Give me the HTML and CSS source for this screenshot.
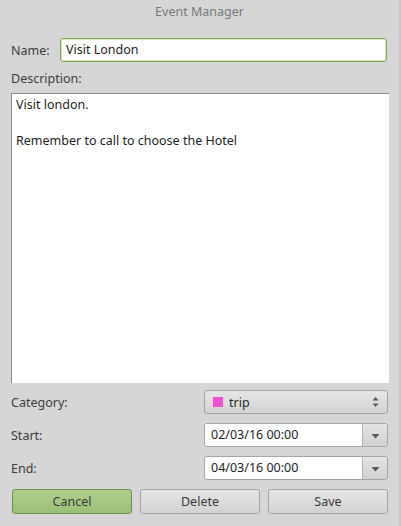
FILE: index.html
```html
<!DOCTYPE html>
<html>
<head>
<meta charset="utf-8">
<link rel="stylesheet" href="styles.css">
</head>
<body>
<div class="window">
  <div class="titlebar">Event Manager</div>
  <div class="content">
    <div class="name-row">
      <label class="label">Name:</label>
      <div class="entry focused">Visit London</div>
    </div>
    <div class="label desc-label">Description:</div>
    <div class="textview">
      <div class="line">Visit london.</div>
      <div class="line">&nbsp;</div>
      <div class="line">Remember to call to choose the Hotel</div>
    </div>
    <div class="grid">
      <div class="label">Category:</div>
      <div class="combo">
        <span class="swatch"></span>
        <span class="combo-text">trip</span>
        <svg class="updown" width="7" height="12" viewBox="0 0 7 12"><path d="M3.5 1 L6.5 4.5 L0.5 4.5 Z" fill="#5a5a5a"/><path d="M3.5 11 L6.5 7.5 L0.5 7.5 Z" fill="#5a5a5a"/></svg>
      </div>
      <div class="label">Start:</div>
      <div class="datefield">
        <div class="date-text">02/03/16 00:00</div>
        <div class="date-btn"><svg width="9" height="6" viewBox="0 0 9 6"><path d="M0.5 1 L8.5 1 L4.5 5.5 Z" fill="#5a5a5a"/></svg></div>
      </div>
      <div class="label">End:</div>
      <div class="datefield">
        <div class="date-text">04/03/16 00:00</div>
        <div class="date-btn"><svg width="9" height="6" viewBox="0 0 9 6"><path d="M0.5 1 L8.5 1 L4.5 5.5 Z" fill="#5a5a5a"/></svg></div>
      </div>
    </div>
    <div class="buttons">
      <div class="btn btn-suggested">Cancel</div>
      <div class="btn">Delete</div>
      <div class="btn">Save</div>
    </div>
  </div>
</div>
</body>
</html>
```

FILE: styles.css
```css
html, body {
  margin: 0;
  padding: 0;
  background: #d6d6d6;
}
body {
  font-family: "Noto Sans", "DejaVu Sans", sans-serif;
  font-size: 12.5px;
  color: #3c3c3c;
}
.window {
  width: 401px;
  height: 526px;
  box-sizing: border-box;
  border-right: 2px solid #c8c8c8;
  background: #d6d6d6;
  display: flex;
  flex-direction: column;
}
.titlebar {
  height: 26px;
  line-height: 24px;
  text-align: center;
  color: #787878;
  font-size: 12.5px;
}
.content {
  display: flex;
  flex-direction: column;
  padding: 12px 12px 0 11px;
}
.label {
  color: #3c3c3c;
}
.name-row {
  display: flex;
  align-items: center;
  height: 24px;
}
.name-row .label {
  width: 49px;
  flex: none;
}
.entry {
  flex: 1;
  height: 24px;
  box-sizing: border-box;
  background: #fff;
  border: 1px solid #a6a6a6;
  border-radius: 3px;
  padding: 0 5px;
  line-height: 22px;
  color: #1e1e1e;
}
.entry.focused {
  border-color: #7ea752;
  box-shadow: inset 0 0 0 1px #d6e6c4;
}
.desc-label {
  margin-top: 7px;
  height: 19px;
  line-height: 19px;
}
.textview {
  margin-top: 5px;
  width: 378px;
  height: 290px;
  box-sizing: border-box;
  background: #fff;
  border-top: 1px solid #8c8c8c;
  border-left: 1px solid #8c8c8c;
  padding: 2px 0 0 4px;
  color: #1e1e1e;
}
.line {
  height: 18px;
  line-height: 18px;
}
.grid {
  display: grid;
  grid-template-columns: 193px 184px;
  row-gap: 9px;
  margin-top: 7px;
  align-items: center;
}
.combo {
  height: 24px;
  box-sizing: border-box;
  border: 1px solid #a3a3a3;
  border-radius: 3px;
  background: linear-gradient(#e6e6e6, #d3d3d3);
  display: flex;
  align-items: center;
  padding: 0 8px 0 8px;
}
.swatch {
  width: 10px;
  height: 10px;
  background: #f050d2;
  flex: none;
}
.combo-text {
  margin-left: 6px;
  flex: 1;
  color: #2a2a2a;
}
.updown {
  flex: none;
}
.datefield {
  height: 24px;
  box-sizing: border-box;
  border: 1px solid #a6a6a6;
  border-radius: 3px;
  display: flex;
  overflow: hidden;
}
.date-text {
  flex: 1;
  background: #fff;
  padding: 0 6px;
  line-height: 22px;
  color: #1e1e1e;
}
.date-btn {
  width: 25px;
  flex: none;
  border-left: 1px solid #b4b4b4;
  background: linear-gradient(#e4e4e4, #d1d1d1);
  display: flex;
  align-items: center;
  justify-content: center;
  padding-top: 1px;
  box-sizing: border-box;
}
.buttons {
  display: grid;
  grid-template-columns: 120px 120px 120px;
  column-gap: 8px;
  margin-top: 9px;
  padding-left: 1px;
}
.btn {
  height: 25px;
  box-sizing: border-box;
  border: 1px solid #a3a3a3;
  border-radius: 3px;
  background: linear-gradient(#e6e6e6, #d2d2d2);
  text-align: center;
  line-height: 23px;
  color: #3a3a3a;
}
.btn-suggested {
  border-color: #6e8d55;
  background: linear-gradient(#afd08c, #9cbf77);
}
```
